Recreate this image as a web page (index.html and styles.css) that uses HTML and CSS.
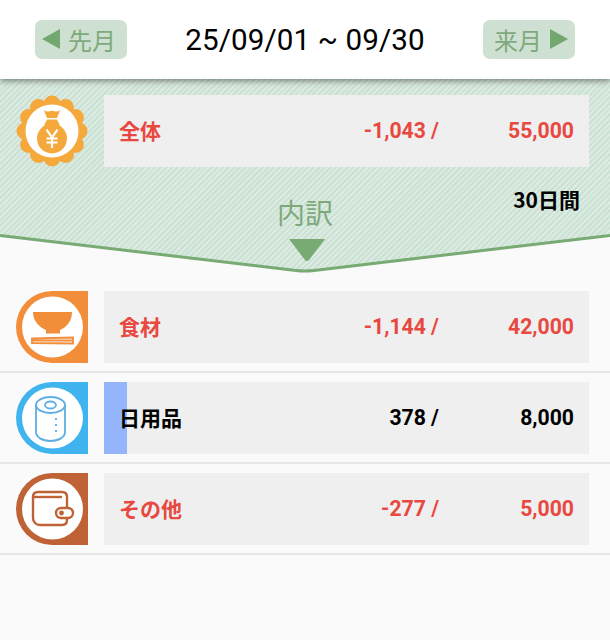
FILE: index.html
```html
<!DOCTYPE html>
<html lang="ja">
<head>
  <meta charset="UTF-8" />
  <title>予算</title>
  <link rel="stylesheet" href="styles.css">
</head>
<body>
  <header class="top-bar">
    <button class="month-btn month-prev"><span class="arrow arrow-left"></span>先月</button>
    <div class="period">25/09/01 ~ 09/30</div>
    <button class="month-btn month-next">来月<span class="arrow arrow-right"></span></button>
  </header>

  <section class="summary">
    <div class="row-main">
      <svg class="icon" viewBox="0 0 72 72">
        <g fill="#f5a93c">
          <circle cx="36" cy="36" r="30"/>
          <circle cx="36" cy="9" r="8.500"/>
          <circle cx="49.500" cy="12.600" r="8.500"/>
          <circle cx="59.400" cy="22.500" r="8.500"/>
          <circle cx="63" cy="36" r="8.500"/>
          <circle cx="59.400" cy="49.500" r="8.500"/>
          <circle cx="49.500" cy="59.400" r="8.500"/>
          <circle cx="36" cy="63" r="8.500"/>
          <circle cx="22.500" cy="59.400" r="8.500"/>
          <circle cx="12.600" cy="49.500" r="8.500"/>
          <circle cx="9" cy="36" r="8.500"/>
          <circle cx="12.600" cy="22.500" r="8.500"/>
          <circle cx="22.500" cy="12.600" r="8.500"/>
        </g>
        <circle cx="36" cy="36" r="26.500" fill="#fff"/>
        <path fill="#f5a93c" d="M28 15.500q4 2 8 0q4 2 8 0l-3 7.500H31z"/>
        <path fill="#f5a93c" d="M31 24.500h10l3 6H28z"/>
        <circle cx="36" cy="43.500" r="15" fill="#f5a93c"/>
        <path fill="none" stroke="#fff" stroke-width="2.200" d="M30.500 34.500l5.500 8 5.500-8M36 42.500V53M30.500 43.500h11M30.500 47.500h11"/>
      </svg>
      <div class="budget-box over">
        <span class="name">全体</span>
        <span class="used">-1,043 /</span>
        <span class="total">55,000</span>
      </div>
    </div>
    <div class="breakdown">
      <span class="breakdown-spacer"></span>
      <div class="breakdown-title">内訳</div>
      <div class="days">30日間</div>
    </div>
    <svg class="notch" viewBox="0 0 610 40" preserveAspectRatio="none">
      <path fill="#fafafa" d="M0 1.500L296 36.500Q305 37.500 314 36.500L610 1.500V40H0z"/>
      <path fill="none" stroke="#78aa74" stroke-width="3" d="M0 1.500L296 36.500Q305 37.500 314 36.500L610 1.500"/>
      <path fill="#78aa74" d="M289 5h36l-16 21q-2 2-4 0z"/>
    </svg>
  </section>

  <section class="list">
    <div class="row">
      <svg class="icon" viewBox="0 0 72 72">
        <path fill="#f28d3a" d="M36 0H72V72H36A36 36 0 0 1 36 0z"/>
        <circle cx="36.500" cy="36" r="30.500" fill="#fff"/>
        <path fill="#f28d3a" d="M17 21H56c0 9-5 15-12 18v3.500H30V39c-7-3-13-9-13-18z"/>
        <path fill="none" stroke="#f28d3a" stroke-width="1.800" d="M16 47.500L57 46.500V52.500L16 52zM16 49.500H57"/>
      </svg>
      <div class="budget-box over">
        <span class="name">食材</span>
        <span class="used">-1,144 /</span>
        <span class="total">42,000</span>
      </div>
    </div>
    <div class="row">
      <svg class="icon" viewBox="0 0 72 72">
        <path fill="#3fb4ef" d="M36 0H72V72H36A36 36 0 0 1 36 0z"/>
        <circle cx="36.500" cy="36" r="30.500" fill="#fff"/>
        <g fill="none" stroke="#5caee4" stroke-width="1.800">
          <path d="M20 23V50c0 5 6 9 14.500 9S49 55 49 50V23"/>
          <ellipse cx="34.500" cy="23" rx="14.500" ry="8"/>
          <ellipse cx="34.500" cy="23" rx="5.500" ry="3.500"/>
          <path stroke-dasharray="2 4" d="M40 36V54"/>
        </g>
      </svg>
      <div class="budget-box">
        <div class="bar" style="width: 4.725%"></div>
        <span class="name">日用品</span>
        <span class="used">378 /</span>
        <span class="total">8,000</span>
      </div>
    </div>
    <div class="row">
      <svg class="icon" viewBox="0 0 72 72">
        <path fill="#bf6236" d="M36 0H72V72H36A36 36 0 0 1 36 0z"/>
        <circle cx="36.500" cy="36" r="30.500" fill="#fff"/>
        <g fill="none" stroke="#bf6236" stroke-width="2.400">
          <path d="M17 24c0-3 2-5 5-5H46c3 0 5 2 5 5V47c0 3-2 5-5 5H24c-4 0-7-3-7-7z"/>
          <path d="M18 24H46"/>
          <rect x="40" y="35" width="17" height="10" rx="5" fill="#fff"/>
          <circle cx="45.500" cy="40" r="1.200"/>
        </g>
      </svg>
      <div class="budget-box over">
        <span class="name">その他</span>
        <span class="used">-277 /</span>
        <span class="total">5,000</span>
      </div>
    </div>
  </section>
</body>
</html>
```

FILE: styles.css
```css
:root {
  --green: #78aa74;
  --red: #e8483f;
  --box: #efefef;
  --jp: "Noto Sans CJK JP", sans-serif;
}

body {
  margin: 0;
  height: 640px;
  overflow: hidden;
  background-color: #fafafa;
  font-family: Roboto, "Noto Sans CJK JP", sans-serif;
  color: #000;
}

.top-bar {
  position: relative;
  z-index: 2;
  height: 79px;
  padding: 0 35px;
  box-sizing: border-box;
  display: flex;
  align-items: center;
  justify-content: space-between;
  background-color: #fff;
  box-shadow: 0 2px 6px rgba(0, 0, 0, 0.45);
}

.month-btn {
  width: 92px;
  height: 39px;
  margin-bottom: 1px;
  padding: 0;
  box-sizing: border-box;
  display: flex;
  align-items: center;
  justify-content: center;
  gap: 8px;
  border: none;
  border-radius: 7px;
  background-color: #cde0d1;
  color: #7fa97c;
  font-family: var(--jp);
  font-size: 24px;
}

.month-prev {
  padding-right: 4px;
}

.month-next {
  padding-left: 4px;
}

.arrow {
  width: 0;
  height: 0;
  border-top: 10px solid transparent;
  border-bottom: 10px solid transparent;
}

.arrow-left {
  border-right: 18px solid #72a770;
}

.arrow-right {
  border-left: 18px solid #72a770;
}

.period {
  font-size: 29.600px;
  letter-spacing: 0.1px;
}

.summary {
  position: relative;
  height: 195px;
  box-sizing: border-box;
  padding-top: 16px;
  background-color: #d6e7dc;
  background-image: repeating-linear-gradient(-45deg, #cbe1d3 0, #cbe1d3 2px, #dcebe2 2px, #dcebe2 4px);
}

.row-main {
  display: flex;
  gap: 16px;
  padding: 0 21px 0 16px;
}

.icon {
  flex: none;
  width: 72px;
  height: 72px;
}

.budget-box {
  position: relative;
  flex: 1;
  height: 72px;
  padding-right: 15px;
  display: flex;
  align-items: center;
  background-color: var(--box);
  font-size: 21.200px;
  font-weight: 700;
}

.budget-box.over {
  color: var(--red);
}

.bar {
  position: absolute;
  left: 0;
  top: 0;
  bottom: 0;
  background-color: #94b5fb;
}

.name {
  position: relative;
  flex: 1;
  margin-bottom: 2px;
  padding-left: 15px;
  font-family: var(--jp);
  font-size: 21px;
}

.used {
  position: relative;
  margin-bottom: 2px;
}

.total {
  position: relative;
  width: 135px;
  margin-bottom: 2px;
  text-align: right;
}

.breakdown {
  display: grid;
  grid-template-columns: 1fr auto 1fr;
  padding-right: 30px;
}

.breakdown-title {
  margin-top: 27px;
  margin-left: 30px;
  color: #7fa97c;
  font-family: var(--jp);
  font-size: 28px;
  font-weight: 400;
  line-height: 36px;
}

.days {
  justify-self: end;
  margin-top: 17px;
  font-family: var(--jp);
  font-size: 21px;
  font-weight: 700;
  line-height: 30px;
}

.notch {
  position: absolute;
  left: 0;
  bottom: 0;
  width: 100%;
  height: 40px;
}

.list {
  padding-top: 8px;
}

.row {
  display: flex;
  gap: 16px;
  padding: 9px 21px 8px 16px;
  border-bottom: 2px solid #e6e6e6;
}
```
